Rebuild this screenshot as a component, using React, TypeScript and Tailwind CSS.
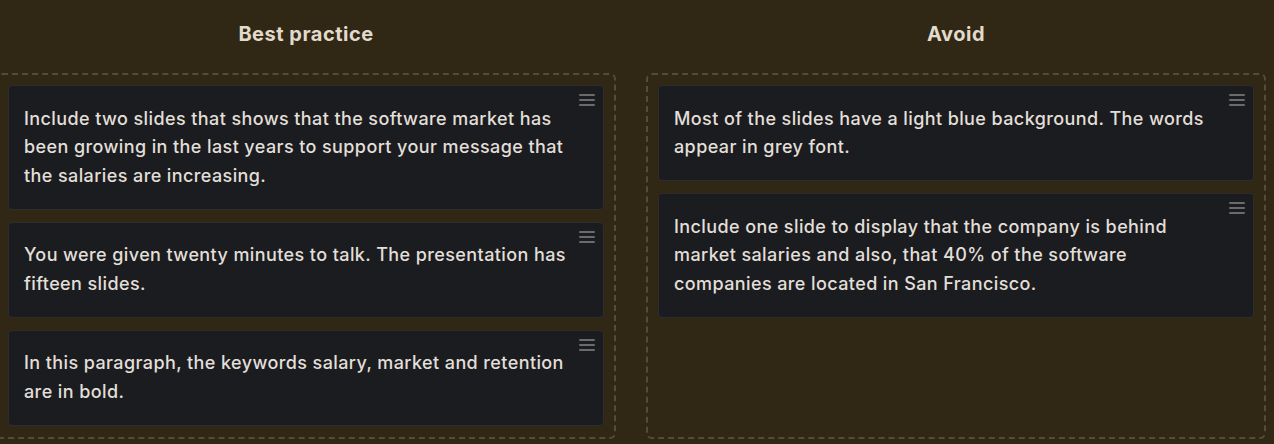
import React from "react";

interface Column {
  title: string;
  items: string[];
}

const columns: Column[] = [
  {
    title: "Best practice",
    items: [
      "Include two slides that shows that the software market has been growing in the last years to support your message that the salaries are increasing.",
      "You were given twenty minutes to talk. The presentation has fifteen slides.",
      "In this paragraph, the keywords salary, market and retention are in bold.",
    ],
  },
  {
    title: "Avoid",
    items: [
      "Most of the slides have a light blue background. The words appear in grey font.",
      "Include one slide to display that the company is behind market salaries and also, that 40% of the software companies are located in San Francisco.",
    ],
  },
];

const DragHandle: React.FC = () => (
  <svg
    className="absolute right-2 top-2"
    width="16"
    height="12"
    viewBox="0 0 16 12"
    fill="none"
  >
    <rect x="0" y="0" width="16" height="2" rx="1" fill="#6b6b6b" />
    <rect x="0" y="5" width="16" height="2" rx="1" fill="#6b6b6b" />
    <rect x="0" y="10" width="16" height="2" rx="1" fill="#6b6b6b" />
  </svg>
);

export default function App() {
  return (
    <div
      className="w-[1274px] h-[444px] overflow-hidden bg-[#302814]"
      style={{ fontFamily: "Inter, 'Open Sans', sans-serif" }}
    >
      <div className="flex gap-[30px] pl-0 pr-2 -ml-1">
        {columns.map((col) => (
          <div key={col.title} className="flex w-[620px] flex-col">
            <h2 className="h-[73px] pt-[22px] text-center text-[20px] font-bold leading-6 tracking-[0.5px] text-[#e2dbcd]">
              {col.title}
            </h2>
            <div className="flex h-[366px] flex-col gap-3 rounded-md border-2 border-dashed border-[#564b35] px-[10px] py-[10px]">
              {col.items.map((text, i) => (
                <div
                  key={i}
                  className="relative rounded border border-[#2d2d2f] bg-[#1b1c1f] py-[18.5px] pl-[15px] pr-6 text-[18px] font-medium leading-[28.5px] tracking-[0.4px] text-[#e2dfd9]"
                >
                  <DragHandle />
                  {text}
                </div>
              ))}
            </div>
          </div>
        ))}
      </div>
    </div>
  );
}
